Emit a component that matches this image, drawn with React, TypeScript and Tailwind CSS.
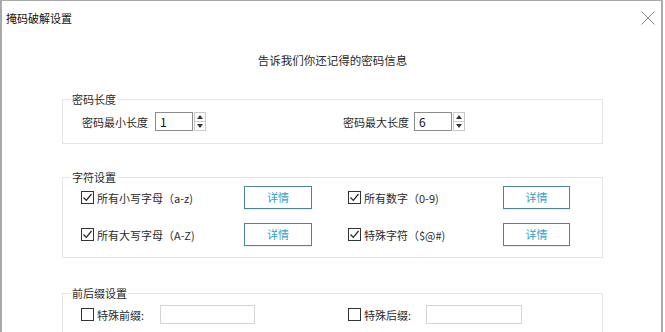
import React from "react";

function Spin() {
  return (
    <div className="flex flex-col w-[12px] h-[19px] border border-[#c9c9c9] bg-white ml-[1px]">
      <div className="flex-1 flex items-center justify-center border-b border-[#c9c9c9]">
        <svg width="6" height="4" viewBox="0 0 6 4">
          <path d="M0 4 L3 0 L6 4Z" fill="#333" />
        </svg>
      </div>
      <div className="flex-1 flex items-center justify-center">
        <svg width="6" height="4" viewBox="0 0 6 4">
          <path d="M0 0 L3 4 L6 0Z" fill="#333" />
        </svg>
      </div>
    </div>
  );
}

function NumInput({ value }: { value: string }) {
  return (
    <div className="flex items-center">
      <div className="w-[38px] h-[19px] border border-[#8c8c8c] bg-white flex items-center pl-[4px] text-[12px] text-[#111] leading-none">
        {value}
      </div>
      <Spin />
    </div>
  );
}

function Check({ checked }: { checked: boolean }) {
  return (
    <div className="w-[13px] h-[13px] border border-[#333] bg-white flex items-center justify-center shrink-0">
      {checked && (
        <svg width="11" height="11" viewBox="0 0 11 11">
          <path d="M1.5 5.5 L4.3 8.3 L9.5 2" stroke="#222" strokeWidth="1.2" fill="none" />
        </svg>
      )}
    </div>
  );
}

function DetailBtn({ w }: { w: string }) {
  return (
    <div
      className={`${w} h-[23px] border border-[#4a8793] bg-white flex items-center justify-center text-[11px] text-[#2fa3c9] shadow-[0_1px_0_#e8f0f2]`}
    >
      详情
    </div>
  );
}

function CheckLabel({ checked, text, w }: { checked: boolean; text: string; w: string }) {
  return (
    <div className={`${w} flex items-center gap-[3px]`}>
      <Check checked={checked} />
      <span className="text-[11px] text-[#2a2a2a] leading-[16px] whitespace-nowrap">{text}</span>
    </div>
  );
}

function Group({ title, children, cls }: { title: string; children: React.ReactNode; cls: string }) {
  return (
    <fieldset className={`ml-[60px] w-[541px] border border-[#e6e6e6] ${cls}`}>
      <legend className="ml-[8px] px-[1px] text-[11px] leading-[16px] text-[#2a2a2a]">{title}</legend>
      {children}
    </fieldset>
  );
}

export default function App() {
  return (
    <div className="w-[665px] h-[332px] bg-white overflow-hidden font-['Noto_Sans_CJK_SC','Microsoft_YaHei',sans-serif]">
      <div className="w-[663px] h-[332px] border-l-2 border-t border-r-2 border-[#a9a9a9] bg-white">
        <div className="h-[33px] flex items-center justify-between pl-[4px] pr-[4px]">
          <span className="text-[11px] text-[#111] leading-[16px]">掩码破解设置</span>
          <svg width="16" height="16" viewBox="0 0 16 16" className="mr-[1px]">
            <path d="M1.5 1.5 L14.5 14.5 M14.5 1.5 L1.5 14.5" stroke="#8a8a8a" strokeWidth="1" fill="none" />
          </svg>
        </div>
        <div className="mt-[18px] text-center text-[11.5px] leading-[16px] text-[#2a2a2a] pl-[2px]">
          告诉我们你还记得的密码信息
        </div>
        <div className="mt-[23px]">
          <Group title="密码长度" cls="pb-[12px]">
            <div className="flex items-center pt-[5px] pl-[19px]">
              <div className="w-[261px] flex items-center">
                <span className="text-[11px] text-[#2a2a2a] leading-[16px] w-[73px]">密码最小长度</span>
                <NumInput value="1" />
              </div>
              <div className="flex items-center">
                <span className="text-[11px] text-[#2a2a2a] leading-[16px] w-[71px]">密码最大长度</span>
                <NumInput value="6" />
              </div>
            </div>
          </Group>
          <Group title="字符设置" cls="mt-[25px] pb-[11px]">
            <div className="flex flex-col gap-[14px] pt-[1px] pl-[18px]">
              <div className="flex items-center">
                <CheckLabel checked w="w-[163px]" text="所有小写字母（a-z)" />
                <DetailBtn w="w-[68px]" />
                <div className="ml-[36px]">
                  <CheckLabel checked w="w-[155px]" text="所有数字（0-9)" />
                </div>
                <DetailBtn w="w-[67px]" />
              </div>
              <div className="flex items-center">
                <CheckLabel checked w="w-[163px]" text="所有大写字母（A-Z)" />
                <DetailBtn w="w-[68px]" />
                <div className="ml-[36px]">
                  <CheckLabel checked w="w-[155px]" text="特殊字符（$@#)" />
                </div>
                <DetailBtn w="w-[67px]" />
              </div>
            </div>
          </Group>
          <Group title="前后缀设置" cls="mt-[27px] h-[60px]">
            <div className="flex items-center pt-[4px] pl-[18px]">
              <div className="w-[267px] flex items-center">
                <CheckLabel checked={false} w="w-[79px]" text="特殊前缀:" />
                <div className="w-[95px] h-[19px] border border-[#d4d4d4] bg-white" />
              </div>
              <div className="flex items-center">
                <CheckLabel checked={false} w="w-[78px]" text="特殊后缀:" />
                <div className="w-[96px] h-[19px] border border-[#d4d4d4] bg-white" />
              </div>
            </div>
          </Group>
        </div>
      </div>
    </div>
  );
}
